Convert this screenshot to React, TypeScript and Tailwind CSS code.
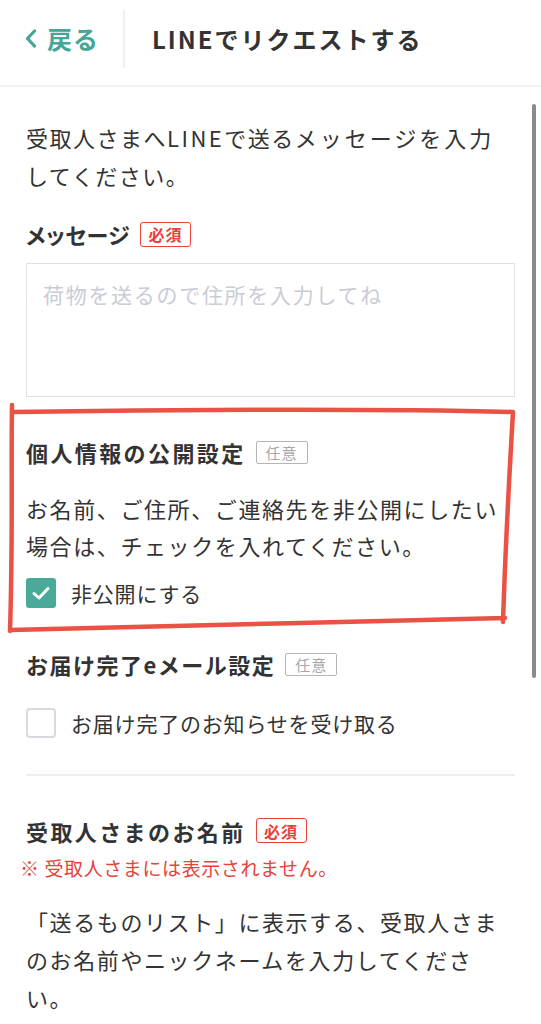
import React from "react";

const font = "font-['Noto_Sans_CJK_JP','Noto_Sans',sans-serif]";

function Badge({ kind }: { kind: "req" | "opt" }) {
  if (kind === "req") {
    return (
      <span className="ml-[10px] inline-flex h-[25px] w-[51px] items-center justify-center rounded-[3px] border-[1.5px] border-[#e8423a] text-[16px] font-bold leading-none tracking-[1px] text-[#e8423a]">
        必須
      </span>
    );
  }
  return (
    <span className="ml-[10px] inline-flex h-[23px] w-[52px] items-center justify-center rounded-[2px] border-[1.5px] border-[#b5b5b5] text-[15px] leading-none tracking-[1px] text-[#a8a8a8]">
      任意
    </span>
  );
}

function Heading({ children, kind, extra = "" }: { children: React.ReactNode; kind: "req" | "opt"; extra?: string }) {
  return (
    <div className="flex h-[32px] items-center">
      <span className={`text-[22px] font-bold leading-[32px] text-[#333] ${extra}`}>{children}</span>
      <Badge kind={kind} />
    </div>
  );
}

function Check({ checked }: { checked: boolean }) {
  if (checked) {
    return (
      <span className="flex h-[30px] w-[30px] items-center justify-center rounded-[3px] bg-[#4aaa9a]">
        <svg width="20" height="20" viewBox="0 0 20 20" fill="none">
          <path d="M3 10.5 L8 15 L17 5.5" stroke="white" strokeWidth="3" strokeLinecap="round" strokeLinejoin="round" />
        </svg>
      </span>
    );
  }
  return <span className="h-[30px] w-[30px] rounded-[4px] border-2 border-[#d8dae0] bg-white" />;
}

export default function App() {
  return (
    <div className={`relative min-h-[1024px] w-[541px] overflow-hidden bg-white ${font} text-[#333]`}>
      {/* header */}
      <header className="flex h-[87px] items-center border-b-2 border-[#f2f2f2] pb-[8px]">
        <div className="flex w-[123px] items-center pl-[25px] text-[#45a697]">
          <svg width="12" height="19" viewBox="0 0 12 19" fill="none" className="mr-[10px]">
            <path d="M9.5 2 L2.5 9.5 L9.5 17" stroke="#45a697" strokeWidth="3.2" strokeLinecap="round" strokeLinejoin="round" />
          </svg>
          <span className="text-[25px] font-bold leading-none tracking-[1px]">戻る</span>
        </div>
        <div className="h-[58px] w-[2px] bg-[#f0f0f2]" />
        <h1 className="ml-[27px] text-[24px] font-bold leading-none tracking-[2px] text-[#333]">LINEでリクエストする</h1>
      </header>

      <main className="px-[26px] pt-[31px]">
        <p className="text-[22px] leading-[38px] tracking-[1.5px]">
          受取人さまへ<span className="tracking-[2.5px]">LINE</span>で送る<span className="tracking-[3px]">メッセージを入力</span>
          <br />
          してください。
        </p>

        <div className="mt-[24px]">
          <Heading kind="req" extra="tracking-[0.5px] [font-feature-settings:'palt']">メッセージ</Heading>
        </div>
        <div className="mt-[13px] h-[134px] w-full border-[1.5px] border-[#dfe0e5] px-[16px] pt-[14px]">
          <span className="text-[21px] leading-[32px] tracking-[1.7px] text-[#c9ccd6]">荷物を送るので住所を入力してね</span>
        </div>

        <div className="mt-[39px]">
          <Heading kind="opt" extra="tracking-[2.4px]">個人情報の公開設定</Heading>
        </div>
        <p className="mt-[22px] text-[22px] leading-[37px] tracking-[1.6px]">
          お名前、ご住所、ご連絡先を非公開にしたい場合は、チェックを入れてください。
        </p>
        <label className="mt-[14px] flex items-center gap-[15px]">
          <Check checked />
          <span className="text-[21px] leading-[30px] tracking-[0.8px]">非公開にする</span>
        </label>

        <div className="mt-[40px]">
          <Heading kind="opt" extra="tracking-[1.5px]">お届け完了eメール設定</Heading>
        </div>
        <label className="mt-[28px] flex items-center gap-[15px]">
          <Check checked={false} />
          <span className="text-[21px] leading-[30px] tracking-[0.8px]">お届け完了のお知らせを受け取る</span>
        </label>

        <div className="mt-[36px] h-[1.5px] w-full bg-[#eeeeef]" />

        <div className="mt-[39px]">
          <Heading kind="req" extra="tracking-[2.4px]">受取人さまのお名前</Heading>
        </div>
        <p className="ml-[-6px] mt-[8px] text-[19px] leading-[26px] tracking-[0.6px] text-[#e8423a]">
          ※ 受取人さまには表示されません。
        </p>
        <p className="mt-[21px] text-[22px] leading-[38px] tracking-[1.6px]">
          「送るものリスト」に表示する、受取人さまのお名前やニックネームを入力してください。
        </p>
      </main>

      {/* scroll indicator */}
      <div className="absolute left-[532px] top-[104px] h-[574px] w-[4px] rounded-full bg-[#8a8a8a]" />

      {/* red hand-drawn annotation */}
      <svg className="pointer-events-none absolute left-0 top-0" width="541" height="1024" viewBox="0 0 541 1024" fill="none">
        <path
          d="M12 405 C 11 470, 13 540, 10 631 M 10 630 C 150 626, 350 622, 505 618 M 503 622 C 505 560, 509 480, 513 412 C 400 409, 200 409, 14 412"
          stroke="#e8493b"
          strokeWidth="4.5"
          strokeLinecap="round"
          strokeLinejoin="round"
          opacity="0.95"
        />
      </svg>
    </div>
  );
}
